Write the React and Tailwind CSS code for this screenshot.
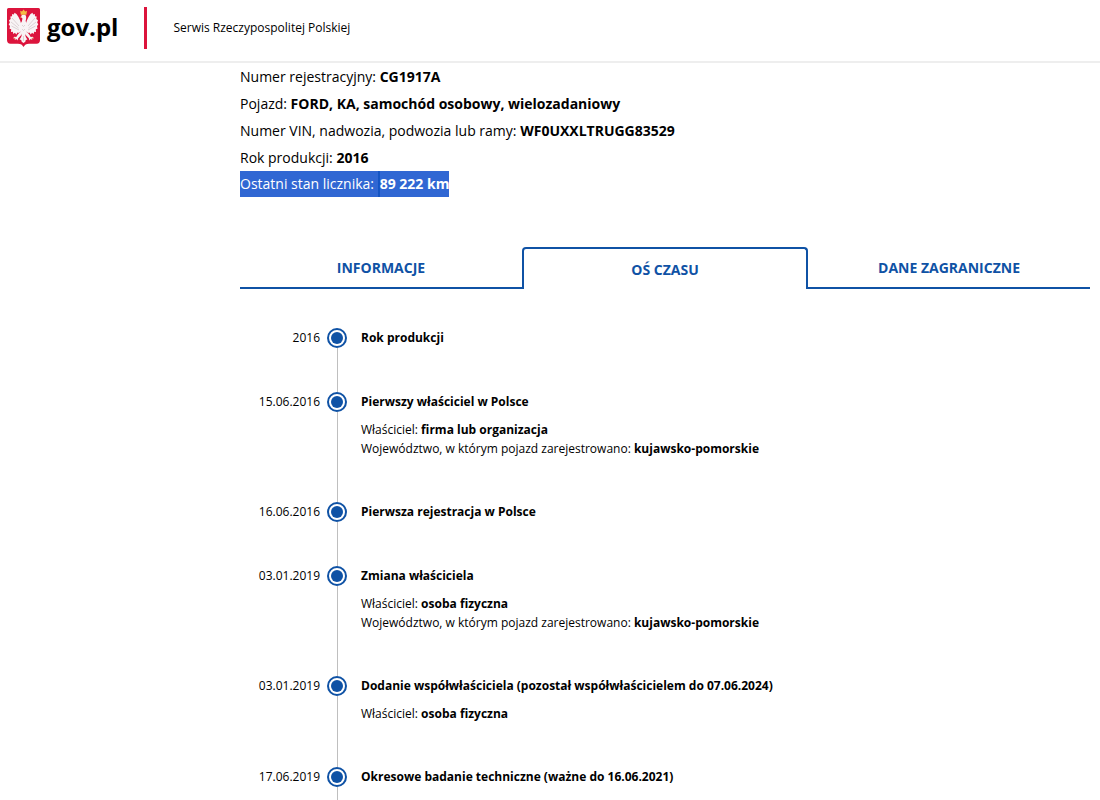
import React from 'react';

const vehicle = [
  { label: 'Numer rejestracyjny:', value: 'CG1917A' },
  { label: 'Pojazd:', value: 'FORD, KA, samochód osobowy, wielozadaniowy' },
  { label: 'Numer VIN, nadwozia, podwozia lub ramy:', value: 'WF0UXXLTRUGG83529' },
  { label: 'Rok produkcji:', value: '2016' },
];

const tabs = ['Informacje', 'Oś czasu', 'Dane zagraniczne'];

const events = [
  { date: '2016', title: 'Rok produkcji' },
  {
    date: '15.06.2016',
    title: 'Pierwszy właściciel w Polsce',
    details: [
      ['Właściciel:', 'firma lub organizacja'],
      ['Województwo, w którym pojazd zarejestrowano:', 'kujawsko-pomorskie'],
    ],
  },
  { date: '16.06.2016', title: 'Pierwsza rejestracja w Polsce' },
  {
    date: '03.01.2019',
    title: 'Zmiana właściciela',
    details: [
      ['Właściciel:', 'osoba fizyczna'],
      ['Województwo, w którym pojazd zarejestrowano:', 'kujawsko-pomorskie'],
    ],
  },
  {
    date: '03.01.2019',
    title: 'Dodanie współwłaściciela (pozostał współwłaścicielem do 07.06.2024)',
    details: [['Właściciel:', 'osoba fizyczna']],
  },
  { date: '17.06.2019', title: 'Okresowe badanie techniczne (ważne do 16.06.2021)' },
];

const Emblem = () => (
  <svg viewBox="0 0 33 39" className="h-[39px] w-[33px] shrink-0" aria-hidden="true">
    <path d="M0 1.5Q0 0 1.5 0H31.5Q33 0 33 1.5V32Q33 35.5 29.5 35.7H22Q18 35.8 16.5 39Q15 35.8 11 35.7H3.5Q0 35.5 0 32Z" fill="#dc143c" />
    <g fill="#f8f4f5">
      {/* wings */}
      <path d="M14.5 17L13.2 12.5L11.5 9L9.5 6L7.4 4.8L7 6.6L5.2 6L5 8.3L3.3 8.6L3.7 11L2 12.2L2.8 14.5L1.7 16.5L3 18L2.5 20.7L4.2 21.2L4 24L5.8 23.8L6.4 26L8 24.8L9.2 26.4L10.6 24.4L12 25L14.5 22Z" />
      <path d="M18.5 17L19.8 12.5L21.5 9L23.5 6L25.6 4.8L26 6.6L27.8 6L28 8.3L29.7 8.6L29.3 11L31 12.2L30.2 14.5L31.3 16.5L30 18L30.5 20.7L28.8 21.2L29 24L27.2 23.8L26.6 26L25 24.8L23.8 26.4L22.4 24.4L21 25L18.5 22Z" />
      {/* head and body */}
      <path d="M14 9.3Q14.2 6.6 16.7 6.6Q19.2 6.7 19.2 9.5Q19.1 11.5 18.6 13L20 16.5L20 23L18.6 26.5H14.4L13 23V16.5L14.8 13.5L15.5 10.6Z" />
      {/* legs */}
      <path d="M13.5 23.5L11 26.2L9.3 29L7.2 28.8L6.2 30.3L8.4 30.2L7.5 32L9.5 31L10.5 32.6L11.2 30.3L14.7 26.4Z" />
      <path d="M19.5 23.5L22 26.2L23.7 29L25.8 28.8L26.8 30.3L24.6 30.2L25.5 32L23.5 31L22.5 32.6L21.8 30.3L18.3 26.4Z" />
      {/* tail */}
      <path d="M15 26H18L18.8 29L20.4 31.5L18.8 32L18.3 33.8L16.5 35L14.7 33.8L14.2 32L12.6 31.5L14.2 29Z" />
    </g>
    <path d="M5 10L12 18M4 14L11.5 20M4.5 18L12 22M28 10L21 18M29 14L21.5 20M28.5 18L21 22M15 17L16.5 18.5L18 17M15 21L16.5 22.5L18 21M16.5 28V33" fill="none" stroke="#c9bcc0" strokeWidth=".6" />
    <path d="M13.8 6.8L13.2 2.8L15 3.6L16.6 1.5L18.2 3.6L20 2.8L19.4 6.8Z" fill="#f3bd45" />
    <path d="M14.4 8.3L12.8 9.2L14.5 9.8ZM8.2 29.5L6.2 30.3L8.1 30.6ZM24.8 29.5L26.8 30.3L24.9 30.6Z" fill="#e9b650" />
  </svg>
);

const TimelineItem = ({ date, title, details }) => (
  <li className="flex">
    <span className="w-20 shrink-0 text-right leading-5">{date}</span>
    <div className="ml-[7px] flex w-5 shrink-0 flex-col items-center">
      <span className="flex size-5 shrink-0 items-center justify-center rounded-full border-2 border-[#0f52a5]">
        <span className="size-3 rounded-full bg-[#0f52a5]" />
      </span>
      <span className="w-px grow bg-[#bfbfbf]" />
    </div>
    <div className="ml-[14px] pb-11">
      <h2 className="font-bold leading-5">{title}</h2>
      {details && (
        <div className="mt-2 leading-[19px]">
          {details.map(([label, value]) => (
            <p key={label}>
              {label} <strong>{value}</strong>
            </p>
          ))}
        </div>
      )}
    </div>
  </li>
);

const App = () => {
  return (
    <div className="min-h-screen bg-white font-['Open_Sans','Noto_Sans',sans-serif] text-black">
      <header className="flex h-[63px] items-start border-b-2 border-[#eeeeee] pl-[7px] pt-[7px]">
        <a href="#" className="flex items-center" aria-label="gov.pl">
          <Emblem />
          <span className="ml-[7px] text-[24px] font-bold leading-10">gov.pl</span>
        </a>
        <span className="ml-[26px] h-[42px] w-[3px] bg-[#dc143c]" />
        <span className="ml-[26px] text-[12px] leading-[42px]">Serwis Rzeczypospolitej Polskiej</span>
      </header>

      <main className="ml-60 mr-[10px]">
        <div className="text-[14px] leading-[27px]">
          {vehicle.map(({ label, value }) => (
            <p key={label}>
              {label} <strong>{value}</strong>
            </p>
          ))}
          <p className="flex leading-[26px] text-white">
            <span className="whitespace-pre bg-[#3067d3]">Ostatni stan licznika: </span>
            <strong className="border-l-2 border-[#1455c4] bg-[#3067d3]">89 222 km</strong>
          </p>
        </div>

        <div role="tablist" className="mt-[50px] flex h-[42px] text-[14px] font-bold text-[#0f52a5]">
          {tabs.map((tab, i) => (
            <button
              key={tab}
              type="button"
              role="tab"
              aria-selected={i === 1}
              className={
                i === 1
                  ? 'flex-1 rounded-t border-2 border-b-0 border-[#0f52a5] uppercase'
                  : 'flex-1 border-b-2 border-[#0f52a5] uppercase'
              }
            >
              {tab}
            </button>
          ))}
        </div>

        <ol className="mt-[39px] text-[12px]">
          {events.map((event) => (
            <TimelineItem key={event.title} {...event} />
          ))}
        </ol>
      </main>
    </div>
  );
};

export default App;
